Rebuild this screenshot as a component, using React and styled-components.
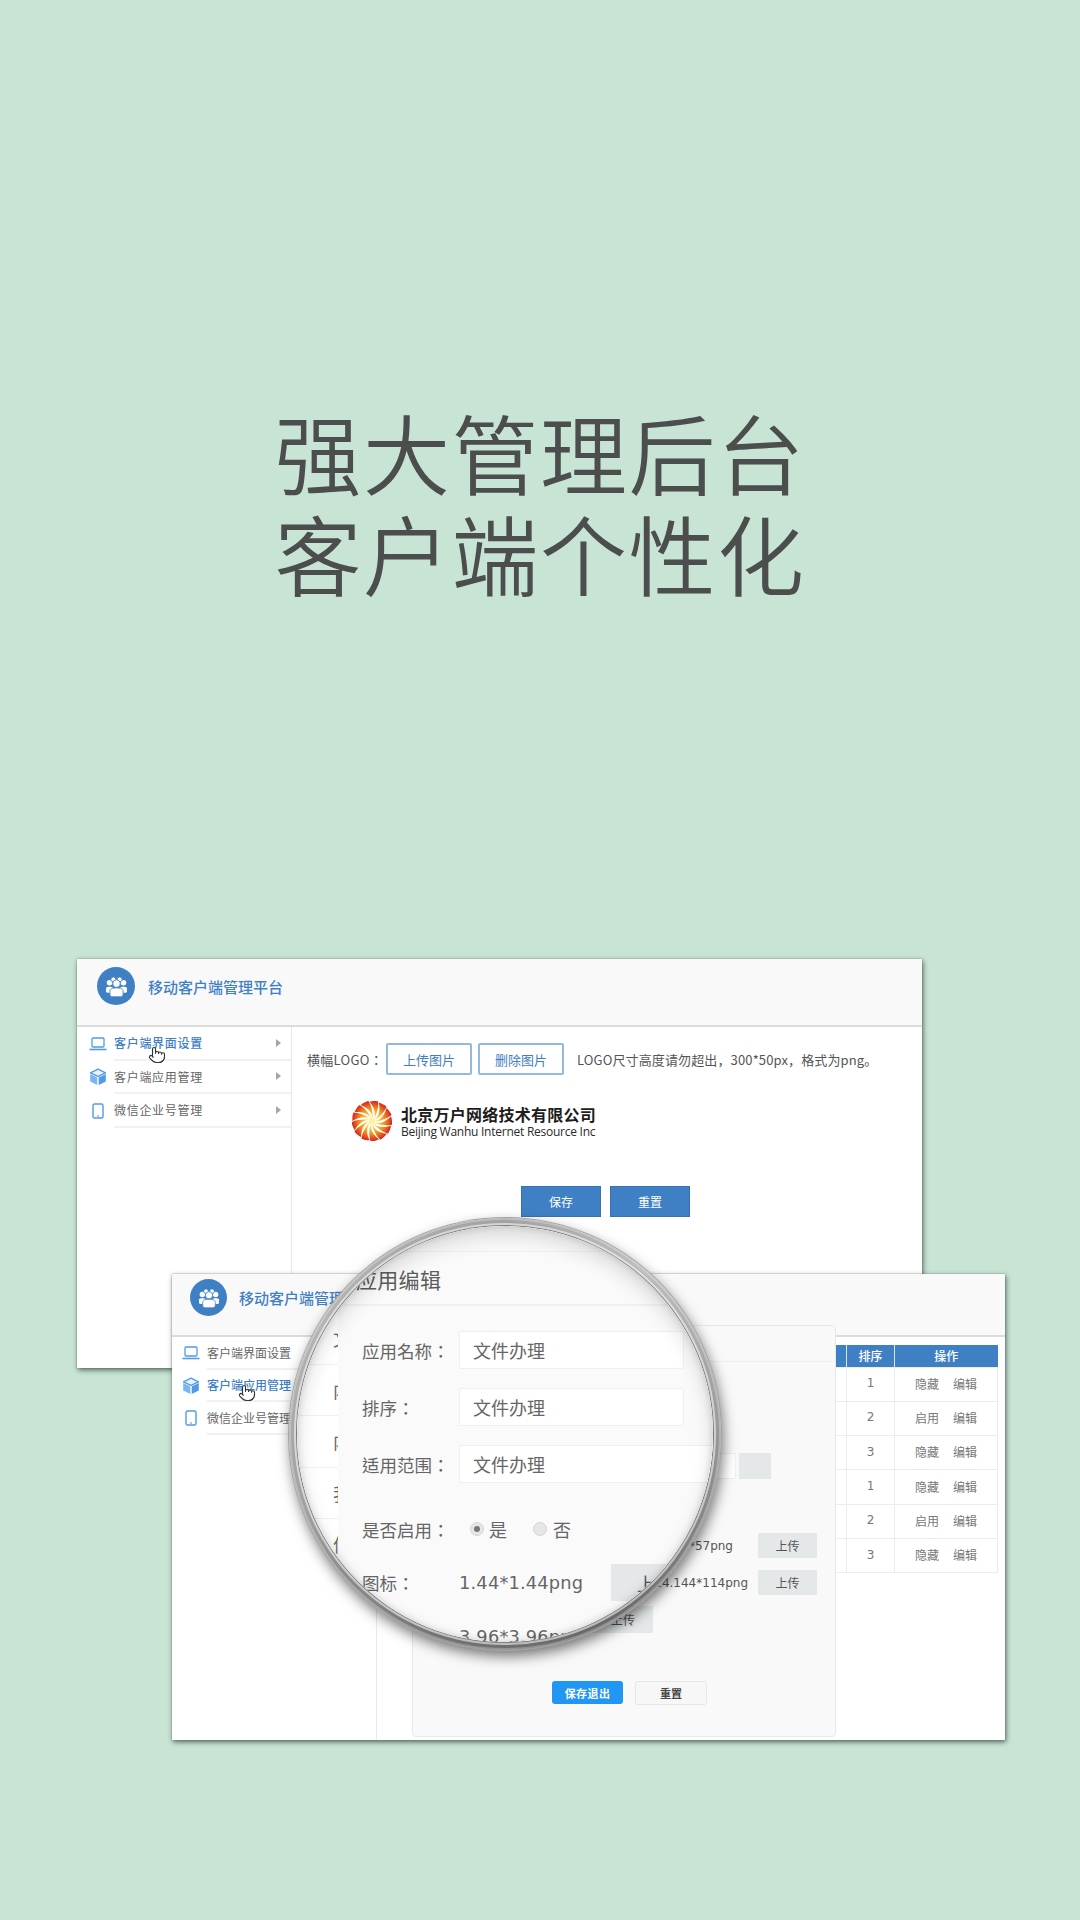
import React from "react";
import styled, { createGlobalStyle } from "styled-components";
import { Pointer } from "lucide-react";

const CJK = `"Noto Sans CJK SC", "Noto Sans", sans-serif`;
const CJK_TC = `"Noto Sans CJK TC", "Noto Sans CJK SC", sans-serif`;
const LATIN = `"DejaVu Sans", "Noto Sans CJK SC", sans-serif`;
const BLUE = "#3f80c5";
const ICON = "#4f9be8";

const Global = createGlobalStyle`
  html, body { margin: 0; padding: 0; background: #c8e4d4; }
  * { box-sizing: border-box; }
`;
const Scene = styled.div`
  position: relative; width: 1080px; height: 1920px; overflow: hidden;
  background: #c8e4d4; font-family: ${CJK};
`;
const Headline = styled.h1`
  margin: 0; padding-top: 401px; text-align: center;
  font: 350 87px/101px ${CJK}; letter-spacing: 1.5px; color: #4b4e4c;
`;
const Line = styled.div``;
const Window = styled.section`
  position: absolute; left: ${p => p.$x}px; top: ${p => p.$y}px;
  width: ${p => p.$w}px; height: ${p => p.$h}px;
  background: #fff; display: flex; flex-direction: column;
  box-shadow: 0 0 1px #5f6f66, 1px 2px 5px rgba(20,30,25,.65);
`;
const Header = styled.header`
  height: ${p => p.$h}px; flex: none; background: #f9f9f9; border-bottom: 2px solid #dcdcdc;
  display: flex; align-items: center; gap: ${p => p.$gap}px; padding: 0 0 ${p => p.$pb}px ${p => p.$pl}px;
`;
const LogoDot = styled.div`
  width: ${p => p.$d}px; height: ${p => p.$d}px; border-radius: 50%; background: ${BLUE};
  display: flex; align-items: center; justify-content: center; flex: none;
`;
const Title = styled.div`
  font-size: 15px; font-weight: 500; color: ${BLUE}; white-space: nowrap;
`;
const Body = styled.div`flex: 1; display: flex; min-height: 0;`;
const Sidebar = styled.nav`
  width: ${p => p.$w}px; flex: none; border-right: 1px solid #e9e9e9;
`;
const NavRow = styled.div`
  height: ${p => p.$h}px; display: flex;
`;
const NavIcon = styled.div`
  width: ${p => p.$w}px; flex: none; display: flex; justify-content: center; align-items: center;
  padding-left: ${p => p.$pl}px;
`;
const NavText = styled.div`
  flex: 1; display: flex; align-items: center; justify-content: space-between;
  padding-right: 10px; border-bottom: 2px solid #f1f1f1;
  font-size: 12px; letter-spacing: ${p => p.$ls}px; white-space: nowrap;
  color: ${p => (p.$active ? BLUE : "#666")};
  font-weight: ${p => (p.$active ? 500 : 400)};
`;
const Arrow = styled.i`
  width: 0; height: 0; border-left: 5px solid #a6a6a6;
  border-top: 4px solid transparent; border-bottom: 4px solid transparent;
`;
const Main1 = styled.main`flex: 1; display: flex; flex-direction: column; padding: 16px 0 0 15px;`;
const Toolbar = styled.div`display: flex; align-items: center; font-size: 13px; color: #555; white-space: nowrap;`;
const UploadLabel = styled.span`width: 79px; letter-spacing: .3px; font-family: ${CJK_TC};`;
const OutlineBtn = styled.div`
  width: 86px; height: 32px; margin-right: 6px; border: 2px solid #94b8de; border-radius: 2px;
  color: ${BLUE}; display: flex; align-items: center; justify-content: center; font-size: 13px; background: #fff;
`;
const Hint = styled.span`margin-left: 7px; letter-spacing: .13px;`;
const BrandRow = styled.div`display: flex; align-items: center; gap: 9px; margin: 26px 0 0 45px;`;
const BrandText = styled.div`display: flex; flex-direction: column;`;
const BrandCn = styled.div`font-size: 16px; font-weight: 700; letter-spacing: .25px; line-height: 20px; color: #1d1d1d; white-space: nowrap;`;
const BrandEn = styled.div`font: 400 12px/15px "Open Sans", sans-serif; color: #2a2a2a; white-space: nowrap; letter-spacing: -.25px;`;
const SaveRow = styled.div`display: flex; justify-content: center; gap: 9px; margin: 45px 0 0 -18px;`;
const SolidBtn = styled.div`
  width: 80px; height: 31px; background: ${BLUE}; border: 1px solid #3572b3; color: #fff; font-size: 12px;
  display: flex; align-items: center; justify-content: center;
`;
const Main2 = styled.main`flex: 1; display: flex; justify-content: flex-end; padding: 8px 7px 0 0;`;
const Table = styled.table`
  border-collapse: collapse; table-layout: fixed; width: 300px; height: 228px; font-size: 12px; color: #777;
  align-self: flex-start;
`;
const Th = styled.th`
  background: ${BLUE}; color: #fff; font-weight: 500; height: 22px; width: ${p => p.$w}px;
  border-left: 1px solid #dbe6f1; padding: 0; font-size: 12px;
`;
const Td = styled.td`
  border: 1px solid #e8eeee; text-align: center; padding: 0 0 2px; height: 34.3px;
  font-family: ${p => (p.$num ? LATIN : CJK)};
`;
const Op = styled.span`margin: 0 7px; color: #777;`;
const Modal = styled.div`
  position: absolute; left: 240px; top: 51px; width: 424px; height: 412px;
  background: #f9f9f9; border: 1px solid #e8e8e8; border-radius: 4px; display: flex; flex-direction: column;
`;
const ModalHead = styled.div`height: 36px; flex: none; border-bottom: 1px solid #eee;`;
const FormRow = styled.div`
  display: flex; justify-content: flex-end; align-items: center; gap: ${p => p.$gap}px;
  margin-top: ${p => p.$mt}px; padding-right: ${p => p.$pr}px; font: 12px ${LATIN}; color: #555; white-space: nowrap;
`;
const SmallInput = styled.div`width: 236px; height: 26px; background: #fff; border: 1px solid #efefef;`;
const GreyBtn = styled.div`
  width: ${p => p.$w}px; height: ${p => p.$h}px; background: #e4e8e9; color: #555; font: 12px ${CJK};
  display: flex; align-items: center; justify-content: center;
`;
const ModalActions = styled.div`display: flex; justify-content: center; gap: 12px; margin-top: 48px; padding-left: 11px;`;
const PrimaryBtn = styled.div`
  width: 71px; height: 23px; background: #2196f3; border-radius: 3px; color: #fff; font-size: 11px; font-weight: 700;
  display: flex; align-items: center; justify-content: center; letter-spacing: .4px;
`;
const GhostBtn = styled.div`
  width: 72px; height: 24px; background: #f7f7f7; border: 1px solid #e6e6e6; border-radius: 3px; color: #444;
  font-size: 11px; font-weight: 700; display: flex; align-items: center; justify-content: center;
`;
const Hand = styled.div`
  position: absolute; left: ${p => p.$x}px; top: ${p => p.$y}px; color: #333; line-height: 0;
`;
/* magnifier */
const LensRing = styled.div`
  position: absolute; left: 289px; top: 1218px; width: 432px; height: 432px; border-radius: 50%; padding: 8px;
  background: conic-gradient(from 0deg, #a2a2a2, #bdbdbd 40deg, #989898 90deg, #686868 150deg, #737373 200deg, #a0a0a0 250deg, #b4b4b4 300deg, #a2a2a2);
  box-shadow: 0 0 0 1px #a5a5a5, 2px 6px 14px rgba(0,0,0,.55), inset 0 0 0 2px rgba(255,255,255,.25);
`;
const Lens = styled.div`
  position: relative; width: 416px; height: 416px; border-radius: 50%; overflow: hidden; background: #fff;
  display: flex; box-shadow: 0 0 0 1px #7e7e7e, 0 0 0 3px rgba(255,255,255,.55);
`;
const LensShade = styled.div`
  position: absolute; inset: 0; border-radius: 50%; pointer-events: none;
  box-shadow: inset 0 9px 20px rgba(0,0,0,.14), inset 0 0 7px rgba(0,0,0,.14);
`;
const Strip = styled.div`width: 41px; flex: none; padding-top: 87px; background: #fff;`;
const StripRow = styled.div`
  height: 51.5px; border-bottom: 1px solid #eef0f2; padding-left: 36px; overflow: hidden;
  display: flex; align-items: center; font-size: 18px; color: #666; white-space: nowrap;
`;
const Panel = styled.div`flex: 1; padding-top: 25px; background: #fafafa; min-width: 0; color: #666;`;
const PanelHead = styled.div`
  height: 55px; border-top: 1px solid #f1f1f1; border-bottom: 2px solid #f0f0f0;
  padding: 8px 0 0 18px; font-size: 21px; line-height: 38px; color: #5c5c5c; letter-spacing: .3px;
`;
const PanelBody = styled.div`padding: 25px 0 0 24px; display: flex; flex-direction: column;`;
const Field = styled.div`
  display: flex; align-items: center; height: ${p => p.$h}px; margin-top: ${p => p.$mt}px; white-space: nowrap;
`;
const FieldLabel = styled.div`width: 97px; flex: none; font: 17.5px ${CJK_TC}; color: #666;`;
const LensInput = styled.div`
  width: ${p => p.$w}px; height: 38px; flex: none; background: #fff; border: 1px solid #eeeff1; border-radius: 2px;
  padding-left: 13px; display: flex; align-items: center; font-size: 18px; color: #666;
`;
const RadioDot = styled.i`
  width: 14px; height: 14px; border-radius: 50%; background: #e6e6e6; border: 1px solid #d4d4d4; flex: none;
  margin: ${p => (p.$first ? "0 5px 0 11px" : "0 6px 0 26px")}; display: flex; align-items: center; justify-content: center;
  &::after { content: ""; width: 6px; height: 6px; border-radius: 50%; background: ${p => (p.$on ? "#777" : "transparent")}; }
`;
const RadioText = styled.span`font-size: 18px; color: #666;`;
const Spec = styled.div`font: 17.8px ${LATIN}; color: #666; letter-spacing: .2px; width: 152px; flex: none;`;
const LensBtn = styled.div`
  width: 90px; height: 37px; flex: none; background: #e4e8e9; font-size: 18px; color: #555;
  display: flex; align-items: center; padding-left: 26px;
`;

const Users = ({ s }) => (
  <svg width={s} height={s} viewBox="0 0 28 28" fill="#fff" stroke={BLUE} strokeWidth="1">
    <circle cx="5.5" cy="9.5" r="3.4" stroke="none" /><circle cx="22.5" cy="9.5" r="3.4" stroke="none" />
    <circle cx="10.2" cy="5.4" r="3" /><circle cx="17.8" cy="5.4" r="3" />
    <path d="M1.5 15.5c1-1.6 7-1.6 8 0v6H3c-1 0-1.800-.8-1.800-1.800z" stroke="none" />
    <path d="M26.500 15.500c-1-1.600-7-1.600-8 0v6H25c1 0 1.800-.8 1.800-1.800z" stroke="none" />
    <circle cx="14" cy="10.5" r="4.6" />
    <path d="M6 19.500c0-3 3-3.800 8-3.800s8 .8 8 3.800v4.200c0 1.500-1.200 2.800-2.800 2.800H8.800C7.200 26.500 6 25.200 6 23.700z" />
  </svg>
);
const LaptopIcon = () => (
  <svg width="18" height="14" viewBox="0 0 18 14" fill="none" stroke={ICON}>
    <rect x="3" y="1" width="12" height="9" rx="1" strokeWidth="1.3" />
    <path d="M.5 12.500h17" strokeWidth="1.6" />
  </svg>
);
const Cube = () => (
  <svg width="18" height="18" viewBox="0 0 18 18">
    <path d="M9 1.200 16.500 4.800 9 8.400 1.500 4.800z" fill="#e9f3fd" stroke={ICON} strokeWidth="1.3" strokeLinejoin="round" />
    <path d="M1.200 6 8.300 9.400V17L1.200 13.600z" fill="#7cb6f0" />
    <path d="M16.800 6 9.700 9.400V17l7.100-3.400z" fill={ICON} />
  </svg>
);
const TabletIcon = () => (
  <svg width="12" height="16" viewBox="0 0 12 16" fill="none" stroke={ICON} strokeWidth="1.4">
    <rect x="1" y="1" width="10" height="14" rx="1.500" />
    <path d="M5 13h2" strokeWidth="1" />
  </svg>
);
const Sun = () => {
  const blades = Array.from({ length: 13 }, (_, i) => (i * 360) / 13);
  return (
    <svg width="40" height="40" viewBox="-20 -20 40 40">
      <defs>
        <radialGradient id="sunGrad" gradientUnits="userSpaceOnUse" cx="0" cy="0" r="20">
          <stop offset="0.25" stopColor="#ffd84a" />
          <stop offset="0.6" stopColor="#f59a20" />
          <stop offset="1" stopColor="#d9261c" />
        </radialGradient>
      </defs>
      <circle r="3.500" fill="#fff3a0" />
      {blades.map(a => (
        <path key={a} transform={`rotate(${a})`} fill="url(#sunGrad)"
          d="M4 0C8.500 -1.500 12.500 -5.500 14.500 -13C16.500 -11.500 18.500 -8.500 19.500 -6C16 -2.800 10 -.6 4 .5z" />
      ))}
    </svg>
  );
};

const navItems = [
  ["客户端界面设置", <LaptopIcon />],
  ["客户端应用管理", <Cube />],
  ["微信企业号管理", <TabletIcon />],
];
const rows = [
  [1, "隐藏"], [2, "启用"], [3, "隐藏"], [1, "隐藏"], [2, "启用"], [3, "隐藏"],
];

export default function App() {
  return (
    <Scene>
      <Global />
      <Headline>
        <Line>强大管理后台</Line>
        <Line>客户端个性化</Line>
      </Headline>

      <Window $x={77} $y={959} $w={845} $h={409}>
        <Header $h={68} $gap={13} $pl={20} $pb={12}>
          <LogoDot $d={38}><Users s={23} /></LogoDot>
          <Title>移动客户端管理平台</Title>
        </Header>
        <Body>
          <Sidebar $w={215}>
            {navItems.map(([t, icon], i) => (
              <NavRow key={t} $h={33.5}>
                <NavIcon $w={37} $pl={5}>{icon}</NavIcon>
                <NavText $active={i === 0} $ls={0.7}>{t}<Arrow /></NavText>
              </NavRow>
            ))}
          </Sidebar>
          <Main1>
            <Toolbar>
              <UploadLabel>横幅LOGO：</UploadLabel>
              <OutlineBtn>上传图片</OutlineBtn>
              <OutlineBtn>删除图片</OutlineBtn>
              <Hint>LOGO尺寸高度请勿超出，300*50px，格式为png。</Hint>
            </Toolbar>
            <BrandRow>
              <Sun />
              <BrandText>
                <BrandCn>北京万户网络技术有限公司</BrandCn>
                <BrandEn>Beijing Wanhu Internet Resource Inc</BrandEn>
              </BrandText>
            </BrandRow>
            <SaveRow>
              <SolidBtn>保存</SolidBtn>
              <SolidBtn>重置</SolidBtn>
            </SaveRow>
          </Main1>
        </Body>
      </Window>

      <Window $x={172} $y={1274} $w={833} $h={466}>
        <Header $h={63} $gap={12} $pl={18} $pb={14}>
          <LogoDot $d={37}><Users s={22} /></LogoDot>
          <Title>移动客户端管理平台</Title>
        </Header>
        <Body>
          <Sidebar $w={205}>
            {navItems.map(([t, icon], i) => (
              <NavRow key={t} $h={32.5}>
                <NavIcon $w={35} $pl={3}>{icon}</NavIcon>
                <NavText $active={i === 1} $ls={0}>{t}</NavText>
              </NavRow>
            ))}
          </Sidebar>
          <Main2>
            <Table>
              <thead>
                <tr><Th $w={149} /><Th $w={48}>排序</Th><Th $w={103}>操作</Th></tr>
              </thead>
              <tbody>
                {rows.map(([n, a], i) => (
                  <tr key={i}>
                    <Td />
                    <Td $num>{n}</Td>
                    <Td><Op>{a}</Op><Op>编辑</Op></Td>
                  </tr>
                ))}
              </tbody>
            </Table>
          </Main2>
        </Body>
        <Modal>
          <ModalHead />
          <FormRow $mt={91} $pr={64} $gap={3}><SmallInput /><GreyBtn $w={32} $h={26} /></FormRow>
          <FormRow $mt={54} $pr={18} $gap={25}>72*57png<GreyBtn $w={59} $h={25}>上传</GreyBtn></FormRow>
          <FormRow $mt={12} $pr={18} $gap={10}>114.144*114png<GreyBtn $w={59} $h={25}>上传</GreyBtn></FormRow>
          <FormRow $mt={11} $pr={182} $gap={0}><GreyBtn $w={60} $h={27}>上传</GreyBtn></FormRow>
          <ModalActions>
            <PrimaryBtn>保存退出</PrimaryBtn>
            <GhostBtn>重置</GhostBtn>
          </ModalActions>
        </Modal>
      </Window>

      <Hand $x={148} $y={1046}><Pointer size={18} fill="#fff" strokeWidth={1.5} /></Hand>
      <Hand $x={238} $y={1384}><Pointer size={18} fill="#fff" strokeWidth={1.5} /></Hand>

      <LensRing>
        <Lens>
          <Strip>
            {["文", "内", "内", "我", "信"].map((c, i) => <StripRow key={i}>{c}</StripRow>)}
          </Strip>
          <Panel>
            <PanelHead>应用编辑</PanelHead>
            <PanelBody>
              <Field $h={38} $mt={0}><FieldLabel>应用名称：</FieldLabel><LensInput $w={225}>文件办理</LensInput></Field>
              <Field $h={38} $mt={19}><FieldLabel>排序：</FieldLabel><LensInput $w={225}>文件办理</LensInput></Field>
              <Field $h={38} $mt={19}><FieldLabel>适用范围：</FieldLabel><LensInput $w={300}>文件办理</LensInput></Field>
              <Field $h={24} $mt={34}>
                <FieldLabel>是否启用：</FieldLabel>
                <RadioDot $first $on /><RadioText>是</RadioText>
                <RadioDot /><RadioText>否</RadioText>
              </Field>
              <Field $h={37} $mt={23}><FieldLabel>图标：</FieldLabel><Spec>1.44*1.44png</Spec><LensBtn>上传</LensBtn></Field>
              <Field $h={37} $mt={17}><FieldLabel /><Spec>3.96*3.96png</Spec></Field>
            </PanelBody>
          </Panel>
          <LensShade />
        </Lens>
      </LensRing>
    </Scene>
  );
}
